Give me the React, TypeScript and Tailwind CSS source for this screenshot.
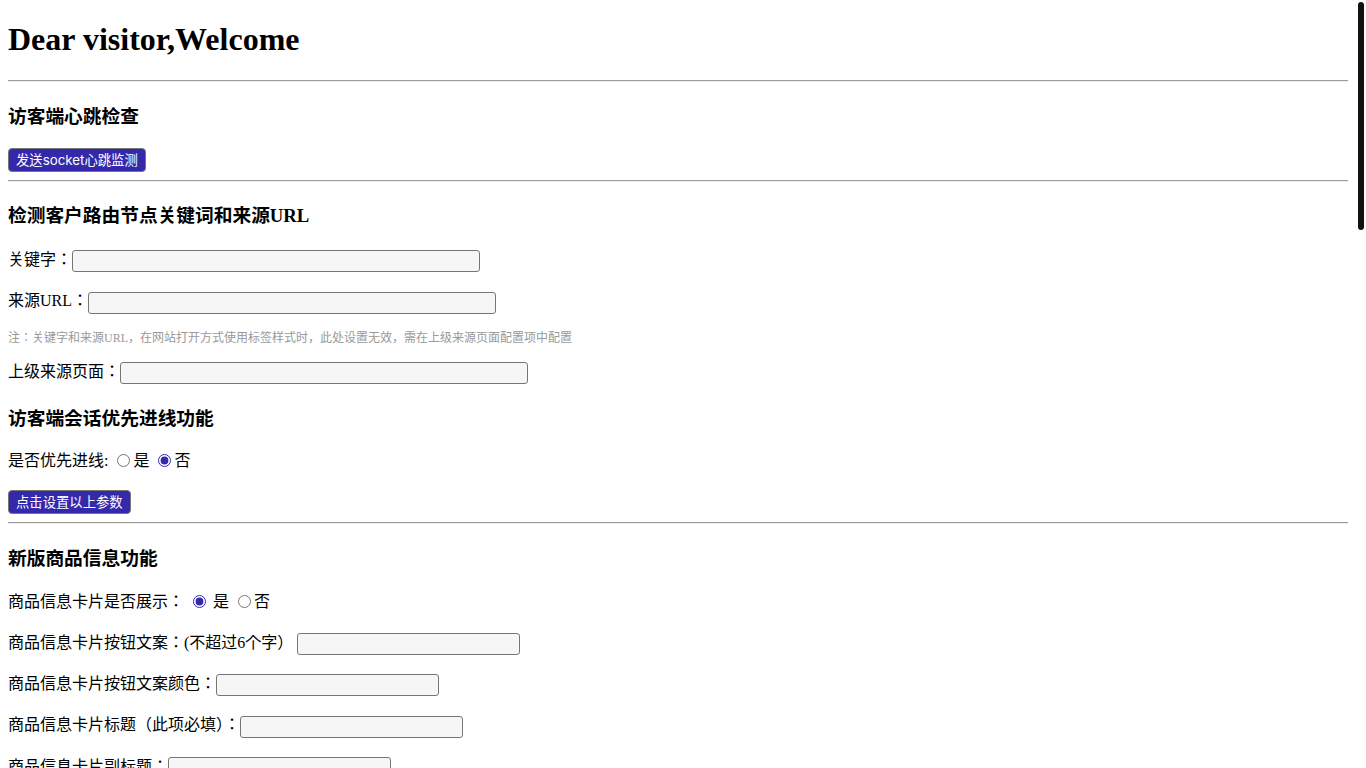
const serif = 'font-["Liberation_Serif","Noto_Sans_CJK_JP",serif]';

function Hr() {
  return <hr className="my-2 h-0 border-0 border-t border-b border-t-[#9a9a9a] border-b-[#eeeeee]" />;
}

function Btn({ children }: { children: React.ReactNode }) {
  return (
    <button
      type="button"
      className='h-6 rounded-[4px] border border-[#767676] bg-[#3529ab] px-[7px] align-middle font-["Inter","Noto_Sans_CJK_SC",sans-serif] text-[13.33px] leading-[20px] text-white'
    >
      {children}
    </button>
  );
}

function H3({ children, className = 'mb-[16.72px]' }: { children: React.ReactNode; className?: string }) {
  return <h3 className={`mt-[20.72px] ${className} text-[18.72px] leading-[27px] font-bold`}>{children}</h3>;
}

function Field({ label, width = 408, className = 'my-4' }: { label: string; width?: number; className?: string }) {
  return (
    <p className={`${className} leading-[25px]`}>
      {label}
      <input
        type="text"
        style={{ width }}
        className="h-[22px] rounded-[3px] border border-[#767676] bg-[#f6f6f6] px-[2px] align-middle"
      />
    </p>
  );
}

function Radio({ name, checked }: { name: string; checked?: boolean }) {
  return (
    <input
      type="radio"
      name={name}
      defaultChecked={checked}
      className="mt-[3px] mr-[3px] ml-[5px] h-[13px] w-[13px] align-[-1px] accent-[#3529ab]"
    />
  );
}

export default function App() {
  return (
    <div className={`${serif} m-2 w-[1340px] text-[16px] leading-[normal] text-black`}>
      <div className="fixed top-[2px] right-[2px] h-[228px] w-[6px] rounded-full bg-[#111111]" />
      <h1 className="my-[21.44px] text-[32px] leading-[37px] font-bold">Dear visitor,Welcome</h1>
      <Hr />
      <H3>访客端心跳检查</H3>
      <div className="leading-[24px]">
        <Btn>发送socket心跳监测</Btn>
      </div>
      <Hr />
      <H3 className="mb-[17.72px]">检测客户路由节点关键词和来源URL</H3>
      <Field label="关键字：" className="mt-[17.72px] mb-4" />
      <Field label="来源URL：" />
      <p className="mt-4 mb-[12px] text-[12px] leading-[17px] text-[#999999]">
        注：关键字和来源URL，在网站打开方式使用标签样式时，此处设置无效，需在上级来源页面配置项中配置
      </p>
      <Field label="上级来源页面：" className="mt-[12px] mb-4" />
      <H3>访客端会话优先进线功能</H3>
      <p className="my-4 leading-[24px]">
        是否优先进线: <Radio name="prior" />是 <Radio name="prior" checked />否
      </p>
      <div className="leading-[24px]">
        <Btn>点击设置以上参数</Btn>
      </div>
      <Hr />
      <H3>新版商品信息功能</H3>
      <p className="mt-[17px] mb-4 leading-[25px]">
        商品信息卡片是否展示： <Radio name="card" checked /> 是 <Radio name="card" />否
      </p>
      <Field label="商品信息卡片按钮文案：(不超过6个字） " width={223} />
      <Field label="商品信息卡片按钮文案颜色：" width={223} />
      <Field label="商品信息卡片标题（此项必填）：" width={223} />
      <Field label="商品信息卡片副标题：" width={223} />
      <Field label="商品信息卡片价格：" width={223} />
      <Field label="商品信息卡片图片地址：" width={223} />
      <Field label="商品信息卡片跳转链接：" width={223} />
      <Field label="商品信息卡片描述：" width={223} />
      <div className="leading-[24px]">
        <Btn>点击设置商品信息</Btn>
      </div>
      <Hr />
      <H3>访客端自定义信息</H3>
      <Field label="访客名称：" />
      <Field label="访客手机号：" />
      <Field label="访客邮箱：" />
      <Field label="访客QQ：" />
      <Field label="访客微信：" />
      <Field label="访客备注：" />
      <Field label="访客自定义字段：" />
      <div className="leading-[24px]">
        <Btn>点击设置访客信息</Btn>
      </div>
      <Hr />
      <H3>访客端窗口设置</H3>
      <p className="my-4 leading-[24px]">
        是否显示最小化按钮: <Radio name="min" checked />是 <Radio name="min" />否
      </p>
      <p className="my-4 leading-[24px]">
        是否显示关闭按钮: <Radio name="close" checked />是 <Radio name="close" />否
      </p>
      <Field label="窗口标题：" />
      <Field label="窗口宽度：" />
      <Field label="窗口高度：" />
      <div className="leading-[24px]">
        <Btn>点击设置窗口参数</Btn>
      </div>
      <Hr />
      <H3>访客端消息发送</H3>
      <Field label="消息内容：" />
      <Field label="消息类型：" />
      <div className="leading-[24px]">
        <Btn>发送消息</Btn>
      </div>
      <Hr />
      <H3>访客端事件监听</H3>
      <Field label="事件名称：" />
      <Field label="回调地址：" />
      <Field label="附加参数：" />
      <div className="leading-[24px]">
        <Btn>开始监听</Btn>
      </div>
      <Hr />
      <H3>访客端其他设置</H3>
      <Field label="语言：" />
      <Field label="主题颜色：" />
      <Field label="渠道标识：" />
      <Field label="业务分组：" />
      <Field label="技能组ID：" />
      <Field label="指定客服ID：" />
      <Field label="扩展参数：" />
      <div className="leading-[24px]">
        <Btn>点击设置其他参数</Btn>
      </div>
      <Hr />
      <H3>访客端日志</H3>
      <p className="my-3 text-[12px] leading-[17px] text-[#999999]">注：以下为访客端运行日志，仅用于调试</p>
      <div className="h-[260px] border border-[#767676] bg-[#f6f6f6]" />
      <div className="h-10" />
    </div>
  );
}
